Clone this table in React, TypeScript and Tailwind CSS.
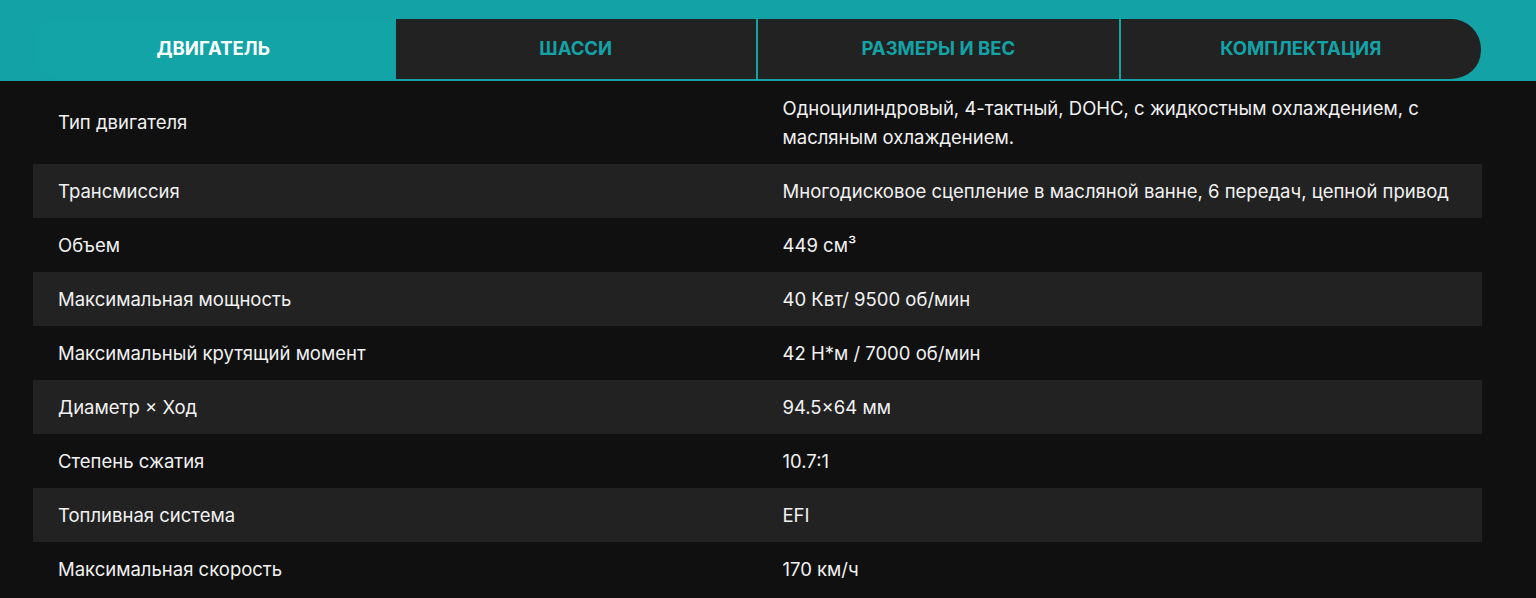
const tabs = ["Двигатель", "Шасси", "Размеры и вес", "Комплектация"]

const specs: [string, string][] = [
    ["Тип двигателя", "Одноцилиндровый, 4-тактный, DOHC, с жидкостным охлаждением, с масляным охлаждением."],
    ["Трансмиссия", "Многодисковое сцепление в масляной ванне, 6 передач, цепной привод"],
    ["Объем", "449 см³"],
    ["Максимальная мощность", "40 Квт/ 9500 об/мин"],
    ["Максимальный крутящий момент", "42 Н*м / 7000 об/мин"],
    ["Диаметр × Ход", "94.5×64 мм"],
    ["Степень сжатия", "10.7:1"],
    ["Топливная система", "EFI"],
    ["Максимальная скорость", "170 км/ч"],
]

function Tabs() {
    return (
        <div className="bg-[#13a3a7] pt-[19px] px-[33px] pr-[55px]">
            <div className="flex h-[62px]">
                {tabs.map((t, i) => {
                    const active = i === 0
                    const last = i === tabs.length - 1
                    return (
                        <button
                            key={t}
                            className={
                                "flex-1 flex items-center justify-center uppercase font-bold text-[18.5px] border-b-2 border-[#13a3a7] " +
                                (active
                                    ? "bg-[#13a4a8] text-white rounded-l-[30px] "
                                    : "bg-[#222222] text-[#13a3a7] border-l-2 ") +
                                (last ? "rounded-r-[30px]" : "")
                            }
                        >
                            {t}
                        </button>
                    )
                })}
            </div>
        </div>
    )
}

function SpecTable() {
    return (
        <div className="px-[33px] pr-[54px]">
            {specs.map(([k, v], i) => (
                <div
                    key={k}
                    className={"grid grid-cols-2 items-center text-[18.5px] leading-[29px] text-[#f2f2f2] " + (i % 2 === 1 ? "bg-[#222222]" : "")}
                >
                    <div className="px-[25px] py-[12.5px]">{k}</div>
                    <div className="px-[25px] py-[12.5px]">{v}</div>
                </div>
            ))}
        </div>
    )
}

export default function App() {
    return (
        <div className="min-h-[598px] bg-[#101010] font-['Inter',_'Noto_Sans',_sans-serif]">
            <Tabs />
            <SpecTable />
        </div>
    )
}
